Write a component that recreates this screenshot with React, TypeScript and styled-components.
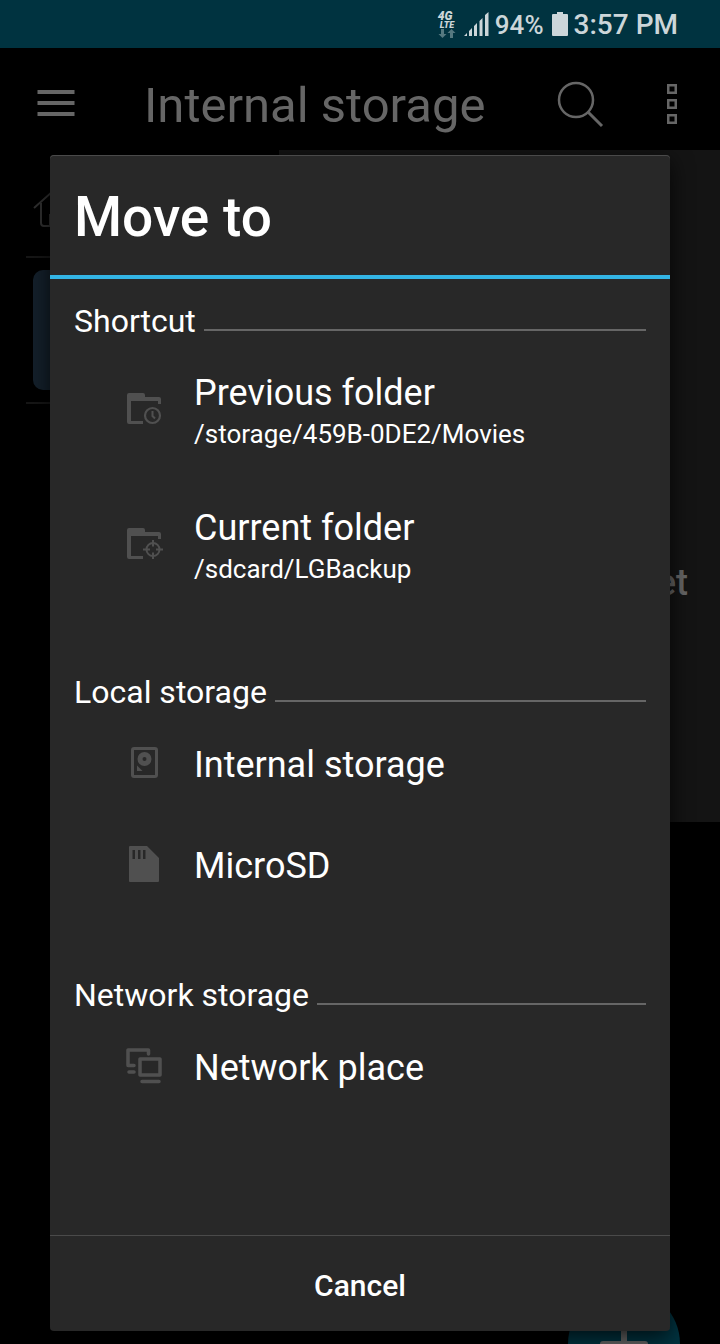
import React from "react";
import styled, { createGlobalStyle } from "styled-components";

const GlobalStyle = createGlobalStyle`
  * { box-sizing: border-box; }
  body {
    margin: 0;
    background: #000;
    color: #fff;
    font-family: Roboto, "Liberation Sans", sans-serif;
  }
  button { border: 0; padding: 0; background: none; color: inherit; font: inherit; }
  svg { display: block; flex: none; }
`;

const Screen = styled.div`
  position: relative;
  display: flex;
  flex-direction: column;
  min-height: 100vh;
  overflow: hidden;
`;

const StatusBar = styled.div`
  display: flex;
  align-items: center;
  justify-content: flex-end;
  height: 48px;
  padding: 0 42px 0 0;
  background: #003340;
  color: #ccd6d9;
  font-weight: 500;
`;

const NetworkBadge = styled.div`
  display: flex;
  flex-direction: column;
  width: 18px;
  margin-right: 8px;
  font-style: italic;
  font-weight: 900;
`;

const NetworkGeneration = styled.span`
  font-size: 12px;
  line-height: 10px;
`;

const NetworkKind = styled.span`
  padding-left: 2px;
  font-size: 9px;
  line-height: 8px;
`;

const BatteryLevel = styled.span`
  margin: 2px 8px 0 6px;
  font-size: 26px;
  line-height: 32px;
`;

const Clock = styled.span`
  margin: 2px 0 0 6px;
  font-size: 28px;
  line-height: 32px;
`;

const AppBar = styled.header`
  display: flex;
  align-items: center;
  height: 102px;
  padding: 10px 42px 0 36px;
  color: #666;
`;

const AppTitle = styled.h1`
  flex: 1;
  margin: 0 0 0 68px;
  padding-top: 4px;
  font-size: 49px;
  font-weight: 400;
  line-height: 64px;
  white-space: nowrap;
`;

const IconButton = styled.button`
  display: flex;
  align-items: center;
`;

const SearchButton = styled(IconButton)`
  margin-right: 62px;
`;

const Browser = styled.main`
  flex: 1;
  padding: 0 26px;
`;

const PathBar = styled.div`
  display: flex;
  align-items: center;
  height: 108px;
  padding: 12px 6px 0;
  border-bottom: 2px solid #161616;
`;

const FolderArea = styled.div`
  padding: 12px 7px;
  border-bottom: 2px solid #161616;
`;

const SelectedFolder = styled.div`
  height: 120px;
  border-radius: 10px;
  background: #14202b;
`;

const OptionsMenu = styled.div`
  position: absolute;
  top: 150px;
  right: 0;
  left: 279px;
  display: flex;
  align-items: center;
  justify-content: flex-end;
  height: 672px;
  padding: 194px 32px 0 0;
  background: #141414;
  color: #666;
  font-size: 36px;
  font-weight: 500;
`;

const AddButton = styled.button`
  position: absolute;
  right: 40px;
  bottom: -56px;
  display: flex;
  align-items: center;
  justify-content: center;
  width: 112px;
  height: 112px;
  border-radius: 50%;
  background: #003340;
  color: #666;
`;

const Overlay = styled.div`
  position: absolute;
  inset: 0;
  display: flex;
  padding: 155px 50px 13px;
`;

const Dialog = styled.section`
  display: flex;
  flex: 1;
  flex-direction: column;
  min-width: 0;
  border-radius: 4px;
  background: #282828;
  box-shadow: inset 0 1px 0 #4a4a4a, 0 6px 22px rgba(0, 0, 0, 0.75);
`;

const DialogTitle = styled.h2`
  margin: 0;
  padding: 26px 24px 22px;
  border-bottom: 4px solid #33b5e5;
  font-size: 55px;
  font-weight: 500;
  line-height: 72px;
`;

const Places = styled.div`
  display: flex;
  flex: 1;
  flex-direction: column;
  gap: 59px;
  padding-top: 21px;
`;

const SectionTitle = styled.h3`
  display: flex;
  align-items: flex-end;
  gap: 8px;
  margin: 0;
  padding: 0 24px;
  font-size: 32px;
  font-weight: 400;
  line-height: 42px;

  &::after {
    content: "";
    flex: 1;
    height: 2px;
    margin-bottom: 11px;
    background: #666;
  }
`;

const PlaceRow = styled.button<{ $tall?: boolean }>`
  display: flex;
  align-items: center;
  gap: 32px;
  width: 100%;
  height: ${(p) => (p.$tall ? 135 : 101)}px;
  padding: 0 24px 0 76px;
  color: #fff;
  text-align: left;

  svg {
    margin-bottom: ${(p) => (p.$tall ? 0 : 2)}px;
    overflow: visible;
    color: #505050;
  }
`;

const PlaceText = styled.span`
  display: flex;
  flex-direction: column;
  padding-top: 2px;
`;

const PlaceName = styled.span`
  font-size: 36px;
  line-height: 46px;
`;

const PlacePath = styled.span`
  font-size: 26px;
  line-height: 36px;
`;

const DialogFooter = styled.footer`
  display: flex;
  height: 96px;
  border-top: 1px solid #4a4a4a;
`;

const CancelButton = styled.button`
  flex: 1;
  padding-top: 3px;
  font-size: 30px;
  font-weight: 500;
`;

const FolderShape = () => (
  <path d="M1 3Q1 1 3 1H17Q19 1 19 3V5H33Q35 5 35 7V12H32V9H5V29H17V32H3Q1 32 1 30Z" fill="currentColor" stroke="none" />
);

const RecentFolderIcon = () => (
  <svg width="36" height="36" viewBox="0 0 36 36" fill="none" stroke="currentColor">
    <FolderShape />
    <circle cx="26.500" cy="23.500" r="7.500" strokeWidth="2.200" />
    <path d="M26.500 19V24L29 26.500" strokeWidth="2" />
  </svg>
);

const CurrentFolderIcon = () => (
  <svg width="36" height="36" viewBox="0 0 36 36" fill="none" stroke="currentColor">
    <FolderShape />
    <circle cx="27" cy="22.500" r="6.500" strokeWidth="2" />
    <path d="M27 13V19.500M27 25.500V32M17 22.500H24M30 22.500H37" strokeWidth="2" />
  </svg>
);

const DriveIcon = () => (
  <svg width="36" height="36" viewBox="0 0 36 36" fill="none" stroke="currentColor">
    <rect x="6.500" y="3.500" width="24" height="28" rx="1.500" strokeWidth="3" />
    <circle cx="18.500" cy="14" r="4.500" strokeWidth="5" />
    <path d="M11 20.500L16.500 26H11Z" fill="currentColor" stroke="none" />
  </svg>
);

const SdCardIcon = () => (
  <svg width="36" height="36" viewBox="0 0 36 36">
    <path
      fillRule="evenodd"
      fill="currentColor"
      d="M4 0H21L33 12V35Q33 36 32 36H4Q3 36 3 35V1Q3 0 4 0ZM6.500 4V13H9V4ZM12 4V13H14.500V4ZM17 4V13H19.500V4Z"
    />
  </svg>
);

const NetworkIcon = () => (
  <svg width="36" height="36" viewBox="0 0 36 36" fill="none" stroke="currentColor" strokeWidth="3.500" strokeLinecap="round" strokeLinejoin="round">
    <path d="M8 17.500H2V2H22.500V6M3 24H8M16 33.500H33" />
    <rect x="14" y="11" width="20" height="16" />
  </svg>
);

type Place = { name: string; path?: string; icon: React.ReactNode };

const sections: { title: string; places: Place[] }[] = [
  {
    title: "Shortcut",
    places: [
      { name: "Previous folder", path: "/storage/459B-0DE2/Movies", icon: <RecentFolderIcon /> },
      { name: "Current folder", path: "/sdcard/LGBackup", icon: <CurrentFolderIcon /> },
    ],
  },
  {
    title: "Local storage",
    places: [
      { name: "Internal storage", icon: <DriveIcon /> },
      { name: "MicroSD", icon: <SdCardIcon /> },
    ],
  },
  {
    title: "Network storage",
    places: [{ name: "Network place", icon: <NetworkIcon /> }],
  },
];

export default function App() {
  return (
    <>
      <GlobalStyle />
      <Screen>
        <StatusBar>
          <NetworkBadge>
            <NetworkGeneration>4G</NetworkGeneration>
            <NetworkKind>LTE</NetworkKind>
            <svg width="18" height="9" viewBox="0 0 18 9" fill="#557980">
              <path d="M3 0H6V5H8.500L4.500 9L.5 5H3ZM12 9V4H9.500L13.500 0L17.500 4H15V9Z" />
            </svg>
          </NetworkBadge>
          <svg width="25" height="24" viewBox="0 0 25 24" fill="currentColor">
            <path d="M0 24L3 21V24ZM5 24V19L8 16V24ZM10 24V14L13 11V24ZM15.500 24V9L18.500 6V24ZM21 24V3L24.500 0V24Z" />
          </svg>
          <BatteryLevel>94%</BatteryLevel>
          <svg width="16" height="24" viewBox="0 0 16 24" fill="currentColor">
            <path d="M5 0H11V2H15Q16 2 16 3V23Q16 24 15 24H1Q0 24 0 23V3Q0 2 1 2H5Z" />
          </svg>
          <Clock>3:57 PM</Clock>
        </StatusBar>

        <AppBar>
          <IconButton aria-label="Menu">
            <svg width="40" height="28" viewBox="0 0 40 28" fill="currentColor">
              <path d="M1.500 0H38.500V4H1.500ZM1.500 11H38.500V15H1.500ZM1.500 22H38.500V26H1.500Z" />
            </svg>
          </IconButton>
          <AppTitle>Internal storage</AppTitle>
          <SearchButton aria-label="Search">
            <svg width="48" height="48" viewBox="0 0 48 48" fill="none" stroke="currentColor">
              <circle cx="20" cy="20" r="17" strokeWidth="2.500" />
              <path d="M31.500 31.500L46 46" strokeWidth="3" />
            </svg>
          </SearchButton>
          <IconButton aria-label="More options">
            <svg width="12" height="42" viewBox="0 0 12 42" fill="none" stroke="currentColor" strokeWidth="2.500">
              <path d="M2.250 2.250H9.750V9.750H2.250ZM2.250 17.250H9.750V24.750H2.250ZM2.250 32.250H9.750V39.750H2.250Z" />
            </svg>
          </IconButton>
        </AppBar>

        <Browser>
          <PathBar>
            <svg width="42" height="40" viewBox="0 0 42 40" fill="none" stroke="#303030" strokeWidth="2">
              <path d="M2 19L21 2L40 19M9 14V34Q9 37 12 37H18V26H24V37H30Q33 37 33 34V14" />
            </svg>
          </PathBar>
          <FolderArea>
            <SelectedFolder />
          </FolderArea>
        </Browser>

        <OptionsMenu>et</OptionsMenu>
        <AddButton aria-label="Add">
          <svg width="48" height="48" viewBox="0 0 48 48" stroke="currentColor" strokeWidth="6" strokeLinecap="round">
            <path d="M24 3V45M3 24H45" />
          </svg>
        </AddButton>

        <Overlay>
          <Dialog role="dialog" aria-labelledby="move-title">
            <DialogTitle id="move-title">Move to</DialogTitle>
            <Places>
              {sections.map((section) => (
                <div key={section.title}>
                  <SectionTitle>{section.title}</SectionTitle>
                  {section.places.map((place) => (
                    <PlaceRow key={place.name} $tall={Boolean(place.path)}>
                      {place.icon}
                      <PlaceText>
                        <PlaceName>{place.name}</PlaceName>
                        {place.path && <PlacePath>{place.path}</PlacePath>}
                      </PlaceText>
                    </PlaceRow>
                  ))}
                </div>
              ))}
            </Places>
            <DialogFooter>
              <CancelButton>Cancel</CancelButton>
            </DialogFooter>
          </Dialog>
        </Overlay>
      </Screen>
    </>
  );
}
